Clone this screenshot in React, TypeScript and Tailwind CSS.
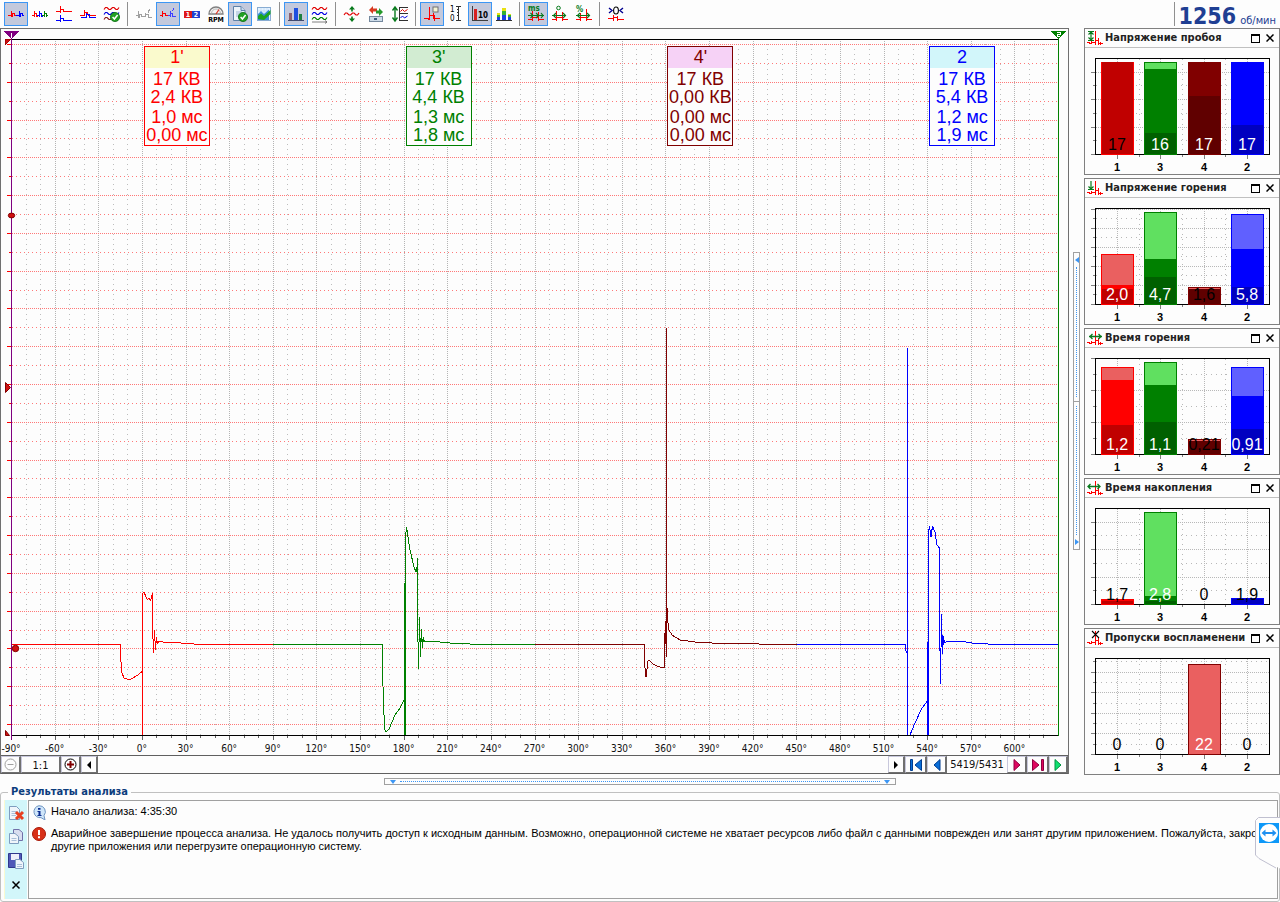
import React from "react";

type Children = { children?: React.ReactNode };

const RED = "#ff0000";
const GREEN = "#008000";
const MAROON = "#800000";
const BLUE = "#0000ff";

/* ---------- toolbar icons ---------- */

function Glyph({ children }: Children) {
  return (
    <svg width="16" height="16" viewBox="0 0 16 16" fill="none" aria-hidden="true" className="overflow-visible">
      {children}
    </svg>
  );
}

function Px({ d, c, w = 1 }: { d: string; c: string; w?: number }) {
  return <path d={d} stroke={c} strokeWidth={w} fill="none" shapeRendering="crispEdges" />;
}

function Check({ x = 11, y = 11 }: { x?: number; y?: number }) {
  return (
    <g transform={`translate(${x} ${y})`}>
      <circle r="4.6" fill="#22a022" stroke="#0c6d14" strokeWidth=".8" />
      <path d="M-2.4 0 -.6 2 2.6 -2" stroke="#fff" strokeWidth="1.5" />
    </g>
  );
}

const WAVE = "l1.5-2 1.5 0 2 2 1.5 0 2-2 1.5 0 2 2 1.5 0 1.5-2";

function Waves({ last = "#8b1a1a" }: { last?: string }) {
  return (
    <>
      <path d={"M0 3.5" + WAVE} stroke="#e00000" strokeWidth="1.2" />
      <path d={"M0 8.5" + WAVE} stroke="#0000e0" strokeWidth="1.2" />
      <path d={"M0 13.5" + WAVE} stroke={last} strokeWidth="1.2" />
    </>
  );
}

const icons: Record<string, React.ReactNode> = {
  pair: (
    <>
      <Px c={RED} d="M0 9.5H4M3.5 11V5M4.5 11V8M4 7.5H7M6.5 7V10M6 9.5H9" />
      <Px c={BLUE} d="M8 9.5H12M11.5 11V5M12.5 11V8M12 7.5H15M14.5 7V10M14 9.5H16" />
    </>
  ),
  triple: (
    <>
      <Px c={RED} d="M0 9.5H3M2.5 11V5M3 7.5H5M4.5 7V10H6" />
      <Px c={BLUE} d="M5 9.5H8M7.5 11V5M8 7.5H10M9.5 7V10H11" />
      <Px c={GREEN} d="M10 9.5H13M12.5 11V5M13 7.5H15M14.5 7V11M14 9.5H16" />
    </>
  ),
  stacked: (
    <>
      <Px c={RED} d="M0 5.5H5M4.5 7V0M4.5 3.5H8M7.5 3V6M7 5.5H16" />
      <Px c={BLUE} d="M0 14.5H5M4.5 16V9M4.5 12.5H8M7.5 12V15M7 14.5H16" />
    </>
  ),
  overlay: (
    <>
      <Px c={RED} d="M0 9.5H4.5M4.5 10V4M4.5 6.5H8M7.5 6V9M7.5 9.5H16" />
      <Px c={BLUE} d="M1 11.5H7M6.5 12V7M6.5 8.5H10M9.5 8V12M9 11.5H16" />
    </>
  ),
  wavesOk: (
    <>
      <Waves />
      <Check />
    </>
  ),
  gray: <Px c="#a0a0a0" d="M0 9.5H3M2.5 12V5M3.5 12V9M3 8.5H6M5.5 8V11M5 10.5H10M9.5 11V7M9 8.5H13M12.5 8V11H16M13.5 3V5M12.5 4V7" />,
  primed: (
    <>
      <Px c={RED} d="M0 9.5H3M2.5 11V5M3 7.5H6M5.5 7V10M5 9.5H8" />
      <Px c="#4040ff" d="M8 9.5H11M10.5 11V5M10.5 7.5H13M12.5 7V10H16M13.5 2V4M12.5 4V5" />
    </>
  ),
  badges: (
    <>
      <rect x="0" y="5" width="8" height="7" fill="#e01818" />
      <rect x="8" y="5" width="8" height="7" fill="#2040d0" />
      <text x="4" y="11" textAnchor="middle" className="text-[7px] font-bold" fill="#fff">1</text>
      <text x="12" y="11" textAnchor="middle" className="text-[7px] font-bold" fill="#fff">2</text>
    </>
  ),
  rpm: (
    <>
      <path d="M1 8A7 7 0 0 1 15 8Z" fill="#f4f4f4" stroke="#808080" strokeWidth="1.3" />
      <path d="M3.5 7.5A4.5 4.5 0 0 1 12.5 7.5" stroke="#b8b8b8" />
      <path d="M8 8 11 3.5" stroke="#e03020" strokeWidth="1.2" />
      <text x="8" y="16" textAnchor="middle" className="text-[7px] font-bold" fill="#000">RPM</text>
    </>
  ),
  docOk: (
    <>
      <path d="M1.5.5H9L13 4.5V14.5H1.5Z" fill="#eef4fa" stroke="#5f81a8" />
      <path d="M9 .5V4.5H13" fill="#c9dbee" stroke="#5f81a8" />
      <path d="M4 6H10M4 8H9M4 10H7" stroke="#9db6d2" />
      <Check />
    </>
  ),
  chartOk: (
    <>
      <rect x="1.5" y="1.5" width="13" height="13" fill="#e4f2ff" stroke="#88acd2" />
      <path d="M2 5H14M2 8H14M5 2V14M8 2V14M11 2V14" stroke="#c3dcf3" strokeWidth=".7" />
      <path d="M2 8 5 5 8 8 13 3.5V14H2Z" fill="#3a8ed8" />
      <path d="M2 10 5 7.5 8 10 14.5 4V8L8 14 2 13Z" fill="#1ba51f" />
    </>
  ),
  bars: (
    <>
      <rect x="1" y="7" width="3" height="7" fill="#8c6070" />
      <rect x="6" y="2" width="4" height="12" fill="#1c4fe0" />
      <rect x="11" y="8" width="3" height="6" fill="#208040" />
      <Px c="#404a70" d="M0 14.5H16" />
    </>
  ),
  wavesArrow: (
    <>
      <Waves last="#008000" />
      <path d="M0 16H15M13 14.5 15 16 13 17.5" stroke="#606060" strokeWidth=".8" />
    </>
  ),
  waveV: (
    <>
      <path d={"M0 9" + WAVE} stroke="#e00000" strokeWidth="1.2" />
      <path d="M8 0 5 3.5H7.2V5.5H8.8V3.5H11ZM8 16 5 12.5H7.2V10.5H8.8V12.5H11Z" fill="#087a1c" />
    </>
  ),
  swap: (
    <>
      <path d="M1 4 5 0V2.5H9V5.5H5V8Z" fill="#d93a20" />
      <path d="M15 6 11 2V4.5H8V7.5H11V10Z" fill="#25992b" />
      <rect x="1.5" y="10.5" width="13" height="5" fill="#cddbe8" stroke="#74889e" />
      <rect x="6" y="12" width="3" height="2" fill="#3c5b7c" />
    </>
  ),
  fit: (
    <>
      <path d="M3 1.5V14.5M.5 4.5 3 1 5.5 4.5M.5 11.5 3 15 5.5 11.5" stroke="#087a1c" strokeWidth="1.4" />
      <Px c="#303030" d="M7 1.5H16M7 7.5H16M7 14.5H16M7.5 1V15" />
      <path d="M8.5 5.5l2-2 2 2 3-2" stroke="#e00000" />
      <path d="M8.5 12l2-2 2 2 3-2" stroke="#0000e0" />
    </>
  ),
  tag: (
    <>
      <Px c={RED} d="M0 12.5H6M5.5 14V1M4.5 14V12M6 9.5H10M9.5 7V13M10.5 9V15M10 12.5H16" />
      <rect x="9" y="1" width="5" height="5" fill="#f4f4d4" stroke="#707070" />
    </>
  ),
  ruler: (
    <>
      <Px c="#303030" d="M8 .5H13M10.5 0V15M8 14.5H13M9 3.5H11M9 6.5H11M9 9.5H11" />
      <text x="2" y="6" className="text-[8px]" fill="#000">1</text>
      <text x="2" y="15" className="text-[8px]" fill="#000">0</text>
    </>
  ),
  ten: (
    <>
      <Px c="#404040" d="M.5 0V14.5H16" />
      <rect x="2" y="3" width="3" height="11" fill="#d82020" />
      <text x="6" y="12" className="text-[8px] font-bold" fill="#000">10</text>
    </>
  ),
  colorBars: (
    <>
      <path d="M1 11H4V14H1ZM6 9H10V14H6ZM12 11H15V14H12Z" fill="#1c3fe0" />
      <path d="M1 9H4V11H1ZM6 5H10V9H6ZM12 9H15V11H12Z" fill="#35b030" />
      <path d="M1 7H4V9H1ZM6 2H10V5H6ZM12 8H15V9H12Z" fill="#e8e010" />
      <Px c="#303030" d="M0 14.5H16" />
    </>
  ),
  ms: (
    <>
      <Px c={RED} d="M0 13.5H4M4.5 15V5M5 11.5H10M10.5 6V15M10 13.5H16" />
      <path d="M0 9.5H16M2.5 7 5 9.5 2.5 12M8 7 10.5 9.5 8 12M13 7 15 9.5 13 12" stroke="#087a1c" strokeWidth="1.2" />
      <text x="0" y="5" className="text-[8px] font-bold" fill="#087a1c">ms</text>
    </>
  ),
  deg: (
    <>
      <Px c={RED} d="M0 13.5H4M4.5 15V5M5 11.5H10M10.5 6V15M10 13.5H16" />
      <path d="M0 9.5H14M4 7 1.5 9.5 4 12M11 7 13.5 9.5 11 12" stroke="#087a1c" strokeWidth="1.2" />
      <circle cx="6.5" cy="2" r="1.8" stroke="#087a1c" />
    </>
  ),
  percent: (
    <>
      <Px c={RED} d="M0 13.5H4M4.5 15V7M5 11.5H10M10.5 3V15M10 13.5H16" />
      <path d="M0 9.5H14M4 7 1.5 9.5 4 12M11 7 13.5 9.5 11 12" stroke="#087a1c" strokeWidth="1.2" />
      <text x="0" y="6" className="text-[8px] font-bold" fill="#087a1c">%</text>
    </>
  ),
  zero: (
    <>
      <path d="M1 2 4 4.5 1 7M15 2 12 4.5 15 7" stroke="#000090" strokeWidth="1.4" />
      <ellipse cx="8" cy="4.5" rx="2.4" ry="3.5" stroke="#000" strokeWidth="1.1" />
      <Px c={RED} d="M0 12.5H5M5.5 15V9M6 11.5H10M9.5 10V15M10 13.5H16" />
    </>
  ),
};

const toolGroups: { id: string; label: string; on?: boolean }[][] = [
  [
    { id: "pair", label: "Парад", on: true },
    { id: "triple", label: "Последовательно" },
    { id: "stacked", label: "Растр" },
    { id: "overlay", label: "Наложение" },
    { id: "wavesOk", label: "Выбор сигналов" },
  ],
  [
    { id: "gray", label: "Фон" },
    { id: "primed", label: "Искра", on: true },
    { id: "badges", label: "Номера цилиндров" },
    { id: "rpm", label: "Обороты" },
    { id: "docOk", label: "Отчёт", on: true },
    { id: "chartOk", label: "График" },
  ],
  [
    { id: "bars", label: "Гистограммы", on: true },
    { id: "wavesArrow", label: "Осциллограммы" },
  ],
  [
    { id: "waveV", label: "Масштаб по вертикали" },
    { id: "swap", label: "Инверсия" },
    { id: "fit", label: "Вписать" },
  ],
  [
    { id: "tag", label: "Метки", on: true },
    { id: "ruler", label: "Шкала" },
    { id: "ten", label: "Значения", on: true },
    { id: "colorBars", label: "Цвета" },
  ],
  [
    { id: "ms", label: "Миллисекунды", on: true },
    { id: "deg", label: "Градусы" },
    { id: "percent", label: "Проценты" },
  ],
  [{ id: "zero", label: "Ноль" }],
];

function Toolbar() {
  return (
    <header className="flex h-7 items-center pr-1 pl-1">
      {toolGroups.map((group, g) => (
        <React.Fragment key={g}>
          {g > 0 && <div className="mr-1 ml-[3px] h-6 w-px bg-[#909090]" />}
          {group.map((t) => (
            <button
              key={t.id}
              type="button"
              aria-label={t.label}
              aria-pressed={!!t.on}
              className={
                t.on
                  ? "flex size-6 items-center justify-center border border-[#3c96f4] bg-[#c3c9dc]"
                  : "flex size-6 items-center justify-center border border-transparent"
              }
            >
              <Glyph>{icons[t.id]}</Glyph>
            </button>
          ))}
        </React.Fragment>
      ))}
      <div className="ml-auto flex h-6 items-baseline gap-1 border-l border-[#909090] pl-1 text-[#1f3f93]">
        <span className="text-[23px] leading-7 font-bold">1256</span>
        <span className="text-[11px]">об/мин</span>
      </div>
    </header>
  );
}

/* ---------- oscillogram ---------- */

const X0 = 11;
const X1 = 1058;
const YT = 39;
const YB = 735;
const STEP = (X1 - X0) / 72;

const traces: [string, string][] = [
  [RED, "M12 644.5H120.5V657L122 673 124 678 128 679.5 131 679 138 675 142.5 671V735V594L144 592 146 597 147.5 600 149 598 150.5 601 152.5 593V624L153.5 653 154.5 630 155.5 650 156.5 637 157.5 644 159 641 163 642 175 642.5 200 644.5H273"],
  [GREEN, "M273 644.5H382.5V672L384.5 729 386 732 389 729 395 715 400 708 404.5 699V735V583M405.5 735V537L406.5 527 410 550 414 567 416 572 417.5 565V558V613L418.5 669 419.5 617 420.5 657 421.5 629 422.5 648 423.5 637 424.5 642 430 641 450 643 480 644.5H535"],
  [MAROON, "M535 644.5H644.5V660L645.5 676 646.5 676 647.5 662 649 660 653 664 658 666.5 664.5 668V645L665.5 621V644M666.5 328V657M667.5 608V620L669 630 672 635 680 640 695 642 720 643.5 797 644.5"],
  [BLUE, "M797 644.5H905.5V648L906.5 653M907.5 348V735M910 735L915 723 922 708 927.5 701V642V735M928.5 735V533L929.5 526 931 537 932.5 526 935 532 937 545 939.5 548V616L940.5 684 941.5 614 942.5 654 943.5 636 944.5 643 947 641 960 641 975 643.5 1000 644.5H1058"],
];

function Oscillogram() {
  const rows = Array.from({ length: 37 }, (_, i) => Math.round(44 + i * 18.89) + 0.5);
  const cols = Array.from({ length: 71 }, (_, i) => i + 1);
  return (
    <svg viewBox="1 29 1067 712" preserveAspectRatio="none" className="absolute inset-0 size-full" shapeRendering="crispEdges">
      {cols.map((i) => {
        const x = Math.round(X0 + i * STEP) + 0.5;
        return (
          <path
            key={i}
            d={`M${x} ${YT}V${YB}`}
            stroke={i % 3 === 0 ? "#b4b4b4" : "#bdbdbd"}
            strokeDasharray={i % 3 === 0 ? "1 1" : "1 4"}
          />
        );
      })}
      {cols.map((i) => (
        <path key={i} d={`M${Math.round(X0 + i * STEP) + 0.5} ${YB}v${i % 3 === 0 ? 5 : 3}`} stroke="#606060" />
      ))}
      {rows.map((y, i) => (
        <g key={y}>
          <path d={`M${X0 + 1} ${y}H${X1}`} stroke="#ff7878" strokeDasharray={i % 2 === 0 ? "1 1" : "1 3"} />
          <path d={`M${i % 2 === 0 ? 7 : 9} ${y}H${X0}`} stroke={RED} />
        </g>
      ))}
      <path d={`M${X0} 39.5H${X1}M${X0} 735.5H${X1}`} stroke="#000" />
      <path d="M11.5 36V740" stroke="#800080" />
      <path d="M1058.5 36V736" stroke={GREEN} />
      {traces.map(([c, d]) => (
        <path key={c} d={d} stroke={c} fill="none" strokeLinejoin="bevel" />
      ))}
      <path d="M4 31H19L11.5 39Z" fill="#800080" />
      <path d="M1051 31H1066L1058.5 39Z" fill={GREEN} />
      <path d="M1057 32.5H1060V34.5H1057.5V36.5H1060" stroke="#fff" fill="none" />
      <path d="M10.5 33.5H11.5V38" stroke="#fff" fill="none" />
      <path d="M5 39H11L5 45Z" fill="#d01010" stroke="#800000" strokeWidth=".5" />
      <g fill="#d01010" stroke="#800000" shapeRendering="auto">
        <ellipse cx="11.5" cy="215.5" rx="3.2" ry="2.4" />
        <ellipse cx="15.5" cy="648.5" rx="3.2" ry="3.2" />
        <path d="M5.5 382.5 10.5 387.5 5.5 392.5Z" />
        <path d="M5.5 730.5 9.5 735.5H5.5Z" />
      </g>
    </svg>
  );
}

const cylinders = [
  { name: "1'", values: ["17 КВ", "2,4 КВ", "1,0 мс", "0,00 мс"], box: "border-[#ff0000] text-[#ff0000]", head: "bg-[#fafacd]" },
  { name: "3'", values: ["17 КВ", "4,4 КВ", "1,3 мс", "1,8 мс"], box: "border-[#008000] text-[#008000]", head: "bg-[#d2ecd2]" },
  { name: "4'", values: ["17 КВ", "0,00 КВ", "0,00 мс", "0,00 мс"], box: "border-[#800000] text-[#800000]", head: "bg-[#f6d2f6]" },
  { name: "2", values: ["17 КВ", "5,4 КВ", "1,2 мс", "1,9 мс"], box: "border-[#0000ff] text-[#0000ff]", head: "bg-[#d2f6fa]" },
];

function CylinderLabels() {
  return (
    <div className="absolute inset-x-0 top-[17px] grid grid-cols-4 px-[10px] font-['Liberation_Sans',sans-serif] text-lg">
      {cylinders.map((c) => (
        <div key={c.name} className="pl-[50%]">
          <div className={`ml-0.5 flex h-[100px] w-[66px] flex-col border bg-[#fdfdfd] text-center ${c.box}`}>
            <div className={`h-[21px] leading-[21px] ${c.head}`}>{c.name}</div>
            <div className="flex flex-col gap-0.5 pt-0.5 leading-[18px] whitespace-nowrap">
              <div>
                <div>{c.values[0]}</div>
                <div>{c.values[1]}</div>
              </div>
              <div>
                <div>{c.values[2]}</div>
                <div>{c.values[3]}</div>
              </div>
            </div>
          </div>
        </div>
      ))}
    </div>
  );
}

const ticks = Array.from({ length: 24 }, (_, i) => -90 + i * 30);

const navBtn =
  "flex h-full items-center justify-center border-t border-r-2 border-b border-l border-t-[#c8c8dc] border-r-[#707070] border-b-[#707070] border-l-[#c8c8dc] bg-[#fdfdfd]";

function NavBar() {
  return (
    <div className="flex h-[19px] border-t border-b border-[#606060]">
      <button type="button" aria-label="Уменьшить" className={`${navBtn} w-5`}>
        <svg width="13" height="13" viewBox="0 0 13 13" fill="none" stroke="#a0a0a0">
          <circle cx="6.5" cy="6.5" r="5.5" />
          <path d="M3.5 6.5H9.5" />
        </svg>
      </button>
      <button type="button" className={`${navBtn} w-10 pt-[3px] text-[11px] leading-3`}>1:1</button>
      <button type="button" aria-label="Увеличить" className={`${navBtn} w-5`}>
        <svg width="13" height="13" viewBox="0 0 13 13" fill="none" stroke="#000">
          <circle cx="6.5" cy="6.5" r="5.5" />
          <path d="M3 6.5H10M6.5 3V10" stroke="#800000" strokeWidth="2" />
        </svg>
      </button>
      <button type="button" aria-label="Прокрутить влево" className={`${navBtn} w-[17px]`}>
        <svg width="4" height="8" viewBox="0 0 4 8"><path d="M4 0V8L0 4Z" /></svg>
      </button>
      <div className="flex-1" />
      <button type="button" aria-label="Прокрутить вправо" className={`${navBtn} w-[17px] border-l-[#707070]`}>
        <svg width="4" height="8" viewBox="0 0 4 8"><path d="M0 0V8L4 4Z" /></svg>
      </button>
      <button type="button" aria-label="В начало" className={`${navBtn} w-[22px]`}>
        <svg width="12" height="12" viewBox="0 0 12 12" fill="#0a6fd8" stroke="#003c90">
          <path d="M.5 .5H2.5V11.5H.5ZM11.5 .5V11.5L5 6Z" />
        </svg>
      </button>
      <button type="button" aria-label="Назад" className={`${navBtn} w-5`}>
        <svg width="8" height="12" viewBox="0 0 8 12" fill="#0a6fd8" stroke="#003c90">
          <path d="M7 .5V11.5L1 6Z" />
        </svg>
      </button>
      <output className="w-[60px] text-center text-[11px] leading-[18px]">5419/5431</output>
      <button type="button" aria-label="Вперёд" className={`${navBtn} w-5`}>
        <svg width="8" height="12" viewBox="0 0 8 12" fill="#e00860" stroke="#900040">
          <path d="M1 .5V11.5L7 6Z" />
        </svg>
      </button>
      <button type="button" aria-label="В конец" className={`${navBtn} w-[22px]`}>
        <svg width="12" height="12" viewBox="0 0 12 12" fill="#e00860" stroke="#900040">
          <path d="M.5 .5V11.5L7 6ZM9.5 .5H11.5V11.5H9.5Z" />
        </svg>
      </button>
      <button type="button" aria-label="Воспроизвести" className={`${navBtn} w-[19px] border-r-0`}>
        <svg width="8" height="12" viewBox="0 0 8 12" fill="#10e070" stroke="#009040">
          <path d="M1 .5V11.5L7 6Z" />
        </svg>
      </button>
    </div>
  );
}

/* ---------- histograms ---------- */

type Bar = { text: string; dark?: boolean; c?: "r" | "g" | "m" | "b"; h?: number; mid?: number; low?: number };

const shades = {
  r: [RED, "#c00000", "#ea6060"],
  g: [GREEN, "#006000", "#60e060"],
  m: [MAROON, "#600000", "#ea6060"],
  b: [BLUE, "#0000c0", "#6060ff"],
};

type Arrow = "tall" | "short" | "inner" | "left" | "miss";

const panels: { title: string; step: number; arrow: Arrow; bars: Bar[] }[] = [
  {
    title: "Напряжение пробоя", step: 27.5, arrow: "tall",
    bars: [
      { text: "17", dark: true, c: "r", h: 92, mid: 92, low: 92 },
      { text: "16", c: "g", h: 92, mid: 85, low: 21 },
      { text: "17", c: "m", h: 92, mid: 92, low: 58 },
      { text: "17", c: "b", h: 92, mid: 92, low: 29 },
    ],
  },
  {
    title: "Напряжение горения", step: 19.1, arrow: "short",
    bars: [
      { text: "2,0", c: "r", h: 50, mid: 19, low: 15 },
      { text: "4,7", c: "g", h: 92, mid: 45, low: 27 },
      { text: "1,6", dark: true, c: "m", h: 17, mid: 15, low: 15 },
      { text: "5,8", c: "b", h: 90, mid: 55, low: 17 },
    ],
  },
  {
    title: "Время горения", step: 32, arrow: "inner",
    bars: [
      { text: "1,2", c: "r", h: 87, mid: 74, low: 29 },
      { text: "1,1", c: "g", h: 92, mid: 69, low: 32 },
      { text: "0,21", dark: true, c: "m", h: 15, mid: 13, low: 13 },
      { text: "0,91", c: "b", h: 87, mid: 58, low: 25 },
    ],
  },
  {
    title: "Время накопления", step: 27.5, arrow: "left",
    bars: [
      { text: "1,7", dark: true, c: "r", h: 5, mid: 5, low: 3 },
      { text: "2,8", c: "g", h: 92, mid: 8, low: 3 },
      { text: "0", dark: true },
      { text: "1,9", dark: true, c: "b", h: 6, mid: 6, low: 5 },
    ],
  },
  {
    title: "Пропуски воспламенени", step: 20.6, arrow: "miss",
    bars: [
      { text: "0", dark: true },
      { text: "0", dark: true },
      { text: "22", c: "m", h: 90, mid: 0, low: 0 },
      { text: "0", dark: true },
    ],
  },
];

function Histogram({ step, bars }: { step: number; bars: Bar[] }) {
  const lines: number[] = [];
  for (let y = 1; y * (step / 2) <= 96; y++) lines.push(y);
  return (
    <svg
      viewBox="0 0 193 126"
      preserveAspectRatio="xMidYMin slice"
      className="block h-[126px] w-[193px] shrink-0 font-['Liberation_Sans',sans-serif]"
      shapeRendering="crispEdges"
    >
      {lines.map((i) => {
        const y = Math.round(106 - (i * step) / 2) + 0.5;
        return (
          <g key={i} stroke="#b8b8b8">
            <path d={`M11 ${y}H184`} strokeDasharray={i % 2 ? "1 4" : "1 1"} />
            <path d={`M${i % 2 ? 8 : 6} ${y}H10`} stroke="#808080" />
          </g>
        );
      })}
      {[1, 2, 3, 4, 5, 6, 7].map((i) => {
        const x = Math.round(10.5 + i * 21.6) + 0.5;
        return (
          <g key={i} stroke="#b8b8b8">
            <path d={`M${x} 11V106`} strokeDasharray={i % 2 ? "1 1" : "1 4"} />
            <path d={`M${x} 107V${i % 2 ? 111 : 109}`} stroke="#808080" />
          </g>
        );
      })}
      <path d="M6 106.5H10" stroke="#808080" />
      <rect x="10.5" y="10.5" width="174" height="96" fill="none" stroke="#000" />
      {bars.map((b, i) => {
        const x = Math.round(16 + i * 43.3);
        const [main, low, light] = shades[b.c ?? "r"];
        const h = b.h ?? 0;
        return (
          <g key={i}>
            {b.c && (
              <>
                <rect x={x + 0.5} y={106.5 - h} width="32" height={h} fill={light} stroke={main} />
                <rect x={x} y={106 - (b.mid ?? 0)} width="33" height={b.mid} fill={main} />
                <rect x={x + 1} y={106 - (b.low ?? 0)} width="31" height={b.low} fill={low} />
              </>
            )}
            <text x={x + 16} y="102" textAnchor="middle" className="text-base" fill={b.dark ? "#000" : "#fff"}>{b.text}</text>
            <text x={x + 16} y="123" textAnchor="middle" className="text-[11px] font-bold" fill="#000">{["1", "3", "4", "2"][i]}</text>
          </g>
        );
      })}
    </svg>
  );
}

function PanelIcon({ kind }: { kind: Arrow }) {
  return (
    <Glyph>
      <Px c={RED} d="M0 11.5H3M2.5 11V13M3 12.5H5M4.5 13V10M5 11.5H9M8.5 14V0M9 9.5H12M11.5 7V14M12 12.5H16M13.5 11V14" />
      {kind === "tall" && <path d="M1 .5H7M1 9.5H7M4 1V9M1.5 3.5 4 1 6.5 3.5M1.5 6.5 4 9 6.5 6.5" stroke="#087a1c" strokeWidth="1.2" />}
      {kind === "short" && <path d="M1 8.5H7M4 0V8M1.5 5.5 4 8 6.5 5.5" stroke="#087a1c" strokeWidth="1.2" />}
      {kind === "inner" && <path d="M2 5.5H15M5.5 3 3 5.5 5.5 8M11.5 3 14 5.5 11.5 8" stroke="#087a1c" strokeWidth="1.3" />}
      {kind === "left" && <path d="M1 5.5H13M3.5 3 1 5.5 3.5 8M10.5 3 13 5.5 10.5 8" stroke="#087a1c" strokeWidth="1.3" />}
      {kind === "miss" && <path d="M5 0 12 7M12 0 5 7" stroke="#000" strokeWidth="1.1" />}
    </Glyph>
  );
}

function SidePanels() {
  return (
    <aside className="flex w-[196px] shrink-0 flex-col gap-[3px]">
      {panels.map((p) => (
        <section key={p.title} className="flex flex-auto flex-col overflow-hidden border border-[#808080] last:-mb-px">
          <div className="flex h-[19px] shrink-0 items-center border-b border-[#c0c0c0] pl-0.5">
            <div className="shrink-0 pt-0.5">
              <PanelIcon kind={p.arrow} />
            </div>
            <h2 className="ml-0.5 min-w-0 flex-1 text-[11px] font-bold whitespace-nowrap text-[#222]">{p.title}</h2>
            <button type="button" aria-label="Развернуть" className="p-px">
              <svg width="9" height="9" viewBox="0 0 9 9" fill="none" stroke="#000" shapeRendering="crispEdges">
                <path d="M0 1H9" strokeWidth="2" />
                <path d="M.5 1V8.5H8.5V1" />
              </svg>
            </button>
            <button type="button" aria-label="Закрыть" className="mr-1 ml-1 p-px">
              <svg width="8" height="8" viewBox="0 0 8 8" stroke="#000" strokeWidth="1.5"><path d="M.5 .5 7.5 7.5M7.5 .5 .5 7.5" /></svg>
            </button>
          </div>
          <Histogram step={p.step} bars={p.bars} />
        </section>
      ))}
    </aside>
  );
}

/* ---------- log ---------- */

const pageShape = (
  <>
    <path d="M1.5 1.5H8.5L11.5 4.5V14.5H1.5Z" fill="#f0f5fb" stroke="#7f9dbf" />
    <path d="M3.5 6.5H9M3.5 8.5H9M3.5 10.5H8" stroke="#a9bfd8" />
  </>
);

function Log() {
  return (
    <fieldset className="mx-0 min-w-0 rounded-[3px] border border-[#c0c0c0] px-px pb-0.5">
      <legend className="ml-1.5 px-[3px] text-[11px] leading-3 font-bold text-[#0c3c7c]">Результаты анализа</legend>
      <div className="ml-0.5 flex pt-0.5">
        <div className="flex w-6 shrink-0 flex-col items-center gap-2 border-r border-l border-r-[#fdfdfd] border-l-[#fafad2] bg-[#d2f6fa] pt-[5px]">
          <button type="button" aria-label="Удалить">
            <Glyph>
              {pageShape}
              <path d="M8 7 15 14M15 7 8 14" stroke="#e84020" strokeWidth="3" />
            </Glyph>
          </button>
          <button type="button" aria-label="Копировать">
            <Glyph>
              <path d="M5.5 .5H11L14.5 3.5V11.5H5.5Z" fill="#d8def0" stroke="#7070a8" />
              <path d="M1.5 4.5H7L10.5 7.5V14.5H1.5Z" fill="#f0f5fb" stroke="#7f9dbf" />
              <path d="M3.5 9.5H8.5M3.5 11.5H8.5" stroke="#a9bfd8" />
            </Glyph>
          </button>
          <button type="button" aria-label="Сохранить">
            <Glyph>
              <path d="M.5 .5H13.5V14.5H.5Z" fill="#5058b8" stroke="#30388c" />
              <path d="M3 1H11V7H3Z" fill="#eef0fa" />
              <path d="M7.5 6.5H12L15.5 9.5V15.5H7.5Z" fill="#f0f5fb" stroke="#7f9dbf" />
              <path d="M9 11.5H14M9 13.5H14" stroke="#a9bfd8" />
            </Glyph>
          </button>
          <button type="button" aria-label="Закрыть">
            <Glyph>
              <path d="M4.5 4.5 11.5 11.5M11.5 4.5 4.5 11.5" stroke="#000" strokeWidth="1.5" />
            </Glyph>
          </button>
        </div>
        <div className="min-h-[99px] min-w-0 flex-1 overflow-hidden border border-[#a0a0a0] pl-[3px] font-['Liberation_Sans','DejaVu_Sans',sans-serif] text-[11px] leading-[13px] whitespace-nowrap text-black">
          <div className="flex items-start gap-1 pt-1">
            <svg width="15" height="15" viewBox="0 0 15 15" aria-hidden="true" className="shrink-0">
              <path d="M7 .7A6 6 0 1 0 9 12.6L13 15 12 10.5A6 6 0 0 0 7 .7Z" fill="#cfe6fa" stroke="#6f94c0" />
              <path d="M6 3H8.5V4.8H6ZM5.5 6H8.5V10H9.5V11H5.5V10H6.5V7H5.5Z" fill="#0c2c90" />
            </svg>
            <p>Начало анализа: 4:35:30</p>
          </div>
          <div className="flex items-start gap-1 pt-[7px]">
            <svg width="15" height="15" viewBox="0 0 15 15" aria-hidden="true" className="shrink-0">
              <circle cx="7" cy="7" r="6.5" fill="#d83018" stroke="#a81808" />
              <path d="M6 3H8V8H6ZM6 9.2H8V11.2H6Z" fill="#fff" />
            </svg>
            <p>
              Аварийное завершение процесса анализа. Не удалось получить доступ к исходным данным. Возможно, операционной системе не хватает ресурсов либо файл с данными поврежден или занят другим приложением. Пожалуйста, закрой
              <br />
              другие приложения или перегрузите операционную систему.
            </p>
          </div>
        </div>
      </div>
    </fieldset>
  );
}

function RemoteTab() {
  return (
    <a href="#remote" aria-label="Удалённый доступ" className="absolute right-0 bottom-[33px]">
      <svg width="25" height="52" viewBox="0 0 25 52">
        <path d="M25 .5H3.5L.5 3.5V38L4 41.5 25 51.5Z" fill="#fdfdfd" />
        <path d="M25 .5H3.5L.5 3.5V38L4 41.5 21 51" fill="none" stroke="#c0c0d0" />
        <rect x="4" y="6" width="20" height="20" fill="#0e98f8" />
        <circle cx="14" cy="16" r="9" fill="#fff" />
        <path d="M6.5 16 10.5 12.5V15H17.5V12.5L21.5 16 17.5 19.5V17H10.5V19.5Z" fill="#2090f0" />
      </svg>
    </a>
  );
}

export default function App() {
  return (
    <div className="relative flex min-h-screen flex-col bg-[#fdfdfd] font-['DejaVu_Sans_Condensed','DejaVu_Sans',sans-serif] text-[#111]">
      <Toolbar />
      <main className="flex flex-1">
        <section className="flex min-w-0 flex-1 flex-col border-t border-r border-l border-[#707070]">
          <div className="relative min-h-80 flex-1 overflow-hidden">
            <Oscillogram />
            <CylinderLabels />
          </div>
          <div className="flex h-3.5 px-[10px] text-[10px] leading-[15px]">
            {ticks.map((t) => (
              <div key={t} className="flex-1">
                <div className="flex w-0 justify-center">
                  <span>{t}°</span>
                </div>
              </div>
            ))}
          </div>
          <NavBar />
        </section>
        <div className="flex w-[15px] flex-col justify-center pl-1">
          <div className="flex h-[40%] w-[7px] flex-col items-center border border-[#a0a0a0] py-1">
            <svg width="4" height="6" viewBox="0 0 4 6" fill="#3c96f4"><path d="M4 0V6L0 3Z" /></svg>
            <div className="my-1 w-0 flex-1 border-l border-dotted border-[#3c96f4]" />
            <div className="h-px w-[7px] bg-[#a0a0a0]" />
            <div className="my-1 w-0 flex-1 border-l border-dotted border-[#3c96f4]" />
            <svg width="4" height="6" viewBox="0 0 4 6" fill="#3c96f4"><path d="M0 0V6L4 3Z" /></svg>
          </div>
        </div>
        <SidePanels />
      </main>
      <div className="flex h-3 justify-center pt-1">
        <div className="flex h-[7px] w-2/5 items-center border border-[#a0a0a0] px-[5px]">
          <svg width="6" height="4" viewBox="0 0 6 4" fill="#3c96f4"><path d="M0 0H6L3 4Z" /></svg>
          <div className="mx-1 flex-1 border-t border-dotted border-[#3c96f4]" />
          <svg width="6" height="4" viewBox="0 0 6 4" fill="#3c96f4"><path d="M0 0H6L3 4Z" /></svg>
        </div>
      </div>
      <Log />
      <RemoteTab />
    </div>
  );
}
